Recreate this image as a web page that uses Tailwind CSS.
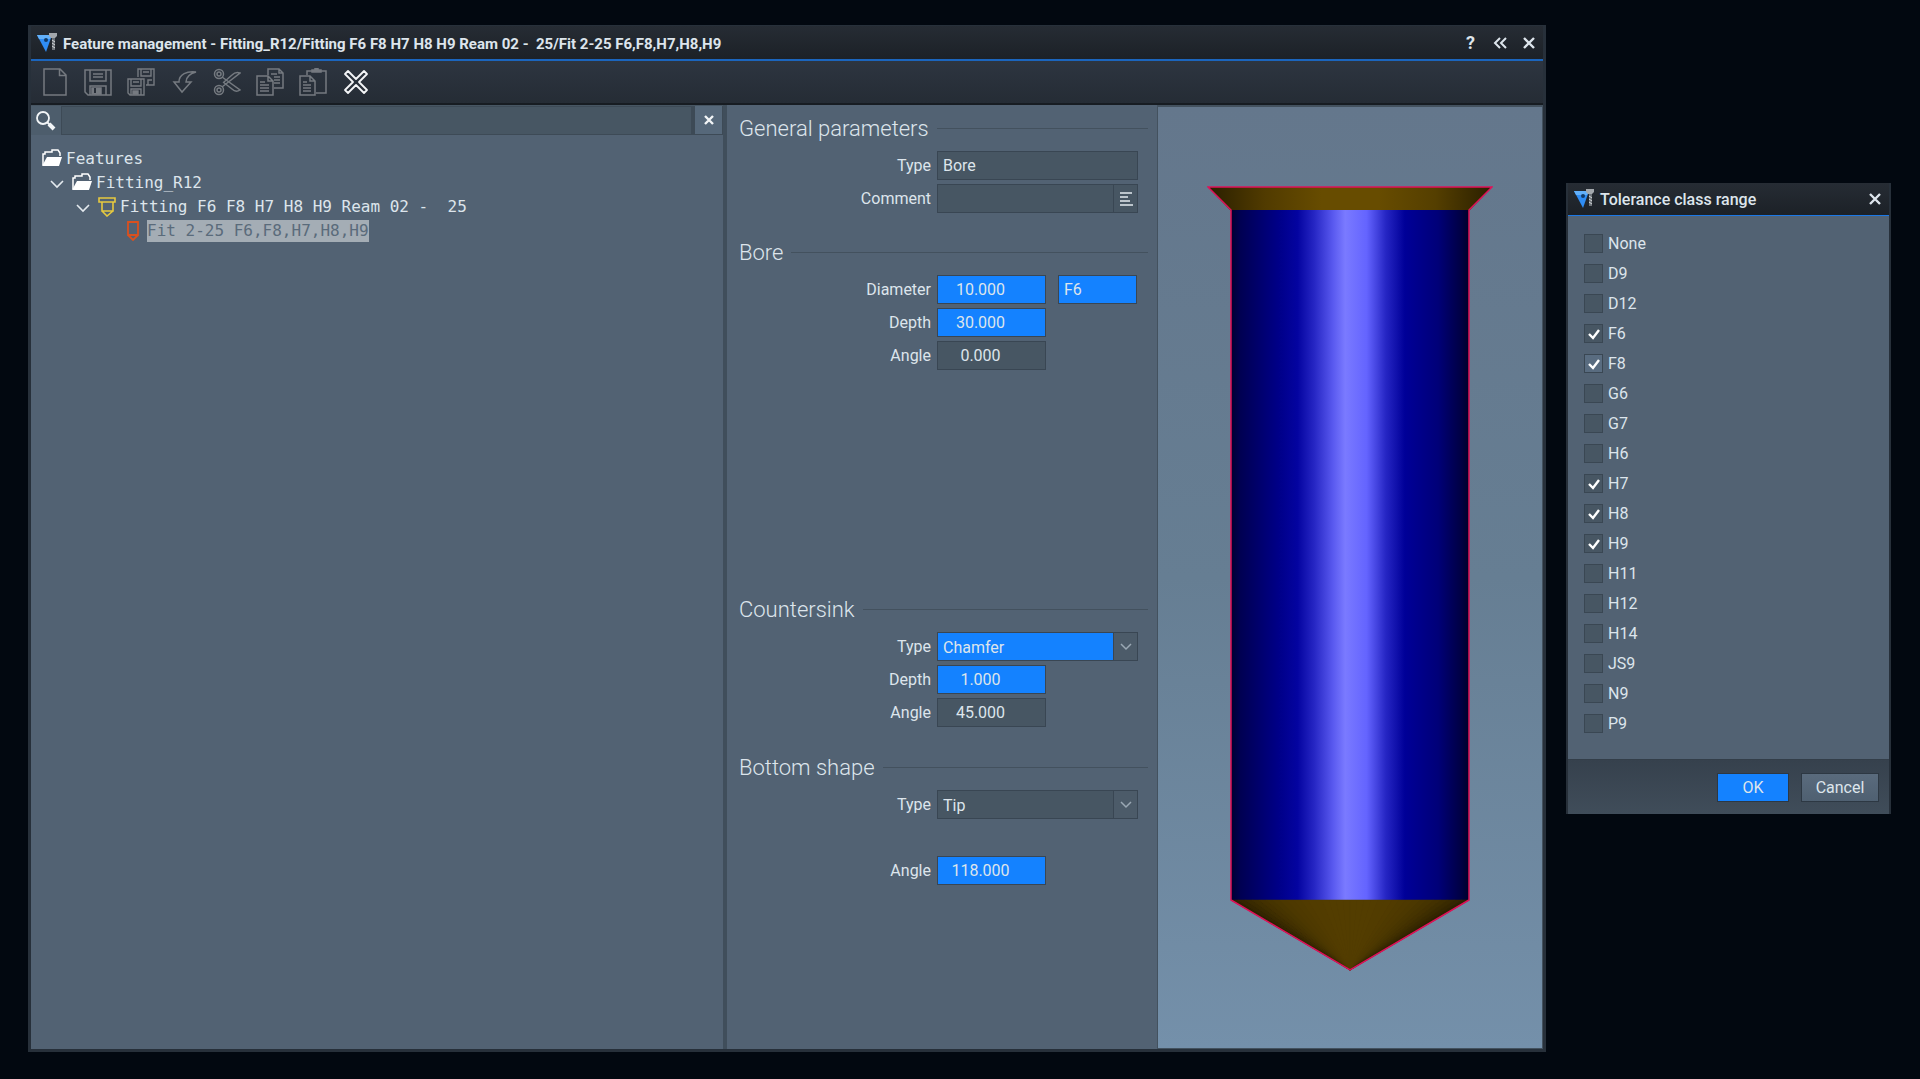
<!DOCTYPE html>
<html lang="en">

<head>
    <meta charset="UTF-8">
    <meta name="viewport" content="width=device-width, initial-scale=1.0">
    <title>Feature management</title>
    <script src="https://cdn.jsdelivr.net/npm/@tailwindcss/browser@4"></script>
</head>

<body class="bg-[#020810] min-h-screen flex items-stretch gap-5 pl-7 pr-[29px] pt-[25px] pb-[27px] font-['Roboto',sans-serif] text-base text-[#dde5ec]">

    <!-- Main window -->
    <main class="flex-1 min-w-0 flex flex-col bg-[#232b35] border-x-3 border-b-3 border-t border-[#27303a]">

        <!-- Title bar -->
        <header class="h-[33px] flex items-center bg-linear-to-b from-[#262c34] to-[#1c2127] pl-[6px]">
            <svg class="w-5 h-5 shrink-0" viewBox="0 0 20 20">
                <path d="M0 2h15L9 19z" fill="#2f8df5" />
                <path d="M0 2h15l-2 4H2z" fill="#62b0fa" />
                <circle cx="9" cy="7" r="2" fill="#123a66" />
                <path d="M12 0h8v3l-2 2h-4l-2-2z" fill="#a3a8ad" />
                <path d="M15 5h3v12h-3z" fill="#6c7278" />
                <path d="M15 7l3 2M15 10l3 2M15 13l3 2" stroke="#d5d9dc" />
            </svg>
            <h1 class="flex-1 min-w-0 truncate whitespace-pre text-[15px] leading-6 font-bold pl-[6px] pt-[3px]">Feature management - Fitting_R12/Fitting F6 F8 H7 H8 H9 Ream 02 -  25/Fit 2-25 F6,F8,H7,H8,H9</h1>
            <button class="w-[29px] h-7 font-bold text-lg leading-7" aria-label="Help">?</button>
            <button class="w-[29px] h-7 grid place-items-center" aria-label="Collapse">
                <svg class="w-4 h-4" viewBox="0 0 16 16" fill="none" stroke="currentColor" stroke-width="2"><path d="M8 3L3 8l5 5M14 3L9 8l5 5" /></svg>
            </button>
            <button class="w-[29px] h-7 grid place-items-center" aria-label="Close">
                <svg class="w-4 h-4" viewBox="0 0 16 16" fill="none" stroke="currentColor" stroke-width="2.4"><path d="M3 3l10 10M13 3L3 13" /></svg>
            </button>
        </header>

        <!-- Toolbar -->
        <div class="h-[46px] flex items-center bg-linear-to-b from-[#2d3540] to-[#252c35] border-t-2 border-t-[#1b65bd] border-b-2 border-b-[#171c22] pl-[2px] text-[#757a80]">
            <button class="w-[43px] h-10 grid place-items-center" aria-label="New">
                <svg class="w-7 h-7" viewBox="0 0 28 28" fill="none" stroke="currentColor" stroke-width="1.5"><path d="M3 1h16l6 6v20H3zM18.500 1v6.500H25" /></svg>
            </button>
            <button class="w-[43px] h-10 grid place-items-center" aria-label="Save">
                <svg class="w-7 h-7" viewBox="0 0 28 28" fill="none" stroke="currentColor" stroke-width="1.5">
                    <path d="M1 2h26v25H4l-3-3zM6 2v11h16V2M9 6h10M9 9h10M6 27v-9h16v9" />
                    <path d="M8 20h9v6H8z" fill="currentColor" /><path d="M11 20v5" stroke="#292f39" stroke-width="2" />
                </svg>
            </button>
            <button class="w-[43px] h-10 grid place-items-center" aria-label="Save all">
                <svg class="w-7 h-7" viewBox="0 0 28 28" fill="none" stroke="currentColor" stroke-width="1.4">
                    <path d="M11 9V1h16v16h-8M14 1v7h10V1M16 4h6M21 17v-5h4" />
                    <path d="M1 11h16v16H3l-2-2zM4 11v7h10v-7M6 14h6M4 27v-6h10v6" />
                    <path d="M6 23h5v3H6z" fill="currentColor" />
                </svg>
            </button>
            <button class="w-[43px] h-10 grid place-items-center" aria-label="Undo">
                <svg class="w-7 h-7" viewBox="0 0 28 28" fill="none" stroke="currentColor" stroke-width="1.5"><path d="M26 4C17 3 9 6 9 14H4l8 10 9-10h-5c0-5 3-8 10-10z" /></svg>
            </button>
            <button class="w-[43px] h-10 grid place-items-center" aria-label="Cut">
                <svg class="w-7 h-7" viewBox="0 0 28 28" fill="none" stroke="currentColor" stroke-width="1.5">
                    <circle cx="6" cy="6" r="4.500" /><circle cx="6" cy="6" r="2" /><circle cx="6" cy="22" r="4.500" /><circle cx="6" cy="22" r="2" />
                    <path d="M9 9l18 13c-3 2-6 1-8-1l-9-7M9 19L27 5c-3-1-6 0-8 2l-8 7" />
                </svg>
            </button>
            <button class="w-[43px] h-10 grid place-items-center" aria-label="Copy">
                <svg class="w-7 h-7" viewBox="0 0 28 28" fill="none" stroke="currentColor" stroke-width="1.5">
                    <path d="M12 7V1h11l4 4v15h-9M23 1v4h4M15 6h6M18 9h6M18 12h6M18 15h6" />
                    <path d="M1 8h11l5 5v14H1zM12 8v5h5M4 14h5M4 17h9M4 20h9M4 23h9" />
                </svg>
            </button>
            <button class="w-[43px] h-10 grid place-items-center" aria-label="Paste">
                <svg class="w-7 h-7" viewBox="0 0 28 28" fill="none" stroke="currentColor" stroke-width="1.5">
                    <path d="M8 7V3h19v22H17" /><path d="M13 4V2h3V0h3v2h3v2z" fill="currentColor" />
                    <path d="M1 8h10l5 5v14H1zM11 8v5h5M4 14h4M4 17h8M4 20h8M4 23h8" />
                </svg>
            </button>
            <button class="w-[43px] h-10 grid place-items-center text-[#f4f6f8]" aria-label="Delete">
                <svg class="w-7 h-7" viewBox="0 0 28 28" fill="none" stroke="currentColor" stroke-width="1.8" stroke-linejoin="round"><path d="M6 3l8 8 8-8 3 3-8 8 8 8-3 3-8-8-8 8-3-3 8-8-8-8z" /></svg>
            </button>
        </div>

        <div class="flex-1 flex bg-[#526273]">

            <!-- Feature tree -->
            <section class="flex-1 min-w-0 flex flex-col border-r-4 border-[#404e5b]">
                <div class="h-[30px] flex bg-[#475663] pt-px">
                    <label for="search" class="w-[30px] grid place-items-center bg-[#4d5d6c]">
                        <svg class="w-5 h-5" viewBox="0 0 20 20" fill="none" stroke="#f2f5f7"><title>Search</title><circle cx="7" cy="7" r="6" stroke-width="1.800" /><path d="M11.500 11.500l2 2" stroke-width="2" /><path d="M13 13l5 5" stroke-width="4" /></svg>
                    </label>
                    <input id="search" type="text" class="flex-1 min-w-0 bg-[#475663] border border-[#3d4a56] px-2 outline-none">
                    <button class="w-[31px] grid place-items-center bg-[#56687a] border-l-3 border-r border-b border-[#3d4a56]" aria-label="Clear search">
                        <svg class="w-[10px] h-[10px]" viewBox="0 0 10 10" stroke="#f2f5f7" stroke-width="2.400"><path d="M1 1l8 8M9 1L1 9" /></svg>
                    </button>
                </div>
                <ul class="pt-3 pl-[11px] font-['DejaVu_Sans_Mono',monospace] leading-6">
                    <li class="flex items-center gap-1 h-6">
                        <svg class="w-5 h-5" viewBox="0 0 20 20"><path d="M1 16V5h2V3h7V1h6l2 3v3" fill="none" stroke="#fff" stroke-width="1.500" /><path d="M5 8h15l-3 9H0z" fill="#fff" /></svg>
                        <span>Features</span>
                    </li>
                    <li class="flex items-center gap-1 h-6 pl-2">
                        <svg class="w-[18px] h-4" viewBox="0 0 18 16" fill="none" stroke="#e4eaef" stroke-width="1.600"><path d="M1 6l6 6 6-6" /></svg>
                        <svg class="w-5 h-5" viewBox="0 0 20 20"><path d="M1 16V5h2V3h7V1h6l2 3v3" fill="none" stroke="#fff" stroke-width="1.500" /><path d="M5 8h15l-3 9H0z" fill="#fff" /></svg>
                        <span>Fitting_R12</span>
                    </li>
                    <li class="flex items-center gap-1 h-6 pl-[34px]">
                        <svg class="w-[18px] h-4" viewBox="0 0 18 16" fill="none" stroke="#e4eaef" stroke-width="1.600"><path d="M1 6l6 6 6-6" /></svg>
                        <svg class="w-[18px] h-5" viewBox="0 0 18 20" fill="none" stroke="#e6c93f" stroke-width="1.600"><path d="M1 1h16v4H1zM4 5v9h11V5M4 14l5 5 6-5" /></svg>
                        <span class="whitespace-pre">Fitting F6 F8 H7 H8 H9 Ream 02 -  25</span>
                    </li>
                    <li class="flex items-center gap-2 h-6 pl-[85px]">
                        <svg class="w-3 h-5" viewBox="0 0 12 20" fill="none" stroke="#d9501e" stroke-width="1.800"><path d="M1 1h10v13H1zM1 14l5 5 5-5" /></svg>
                        <span class="bg-[#a4adb5] text-[#5a6b7b] leading-[22px]">Fit 2-25 F6,F8,H7,H8,H9</span>
                    </li>
                </ul>
            </section>

            <!-- Parameters -->
            <form class="w-[430px] shrink-0 pt-[9px] pl-3 pr-[9px]">
                <fieldset>
                    <legend class="w-full h-7 flex items-center gap-2 text-[22px] font-light">General parameters<span class="flex-1 border-t border-[#43515e]"></span></legend>
                    <div class="grid grid-cols-[192px_201px] gap-x-[6px] gap-y-1 pt-[9px] leading-[29px]">
                        <label for="type" class="text-right">Type</label>
                        <input id="type" value="Bore" class="h-[29px] bg-[#475663] border border-[#394653] px-[5px] outline-none">
                        <label for="comment" class="text-right">Comment</label>
                        <div class="flex h-[29px] bg-[#475663] border border-[#394653]">
                            <input id="comment" class="flex-1 min-w-0 px-[5px] outline-none">
                            <button type="button" class="w-6 grid place-items-center border-l border-[#394653]" aria-label="Edit comment">
                                <svg class="w-[14px] h-[14px]" viewBox="0 0 14 14" stroke="#e4eaef" stroke-width="1.500"><path d="M1 1h12M1 5h8M1 9h10M1 13h13" /></svg>
                            </button>
                        </div>
                    </div>
                </fieldset>

                <fieldset class="mt-[25px]">
                    <legend class="w-full h-7 flex items-center gap-2 text-[22px] font-light">Bore<span class="flex-1 border-t border-[#43515e]"></span></legend>
                    <div class="grid grid-cols-[192px_201px] gap-x-[6px] gap-y-1 pt-[9px] leading-[29px]">
                        <label for="bore-diameter" class="text-right">Diameter</label>
                        <div class="flex gap-3">
                            <input id="bore-diameter" value="10.000" class="w-[109px] h-[29px] bg-[#1482ff] border border-[#394653] text-center pr-[22px] outline-none">
                            <input aria-label="Tolerance class" value="F6" class="w-[79px] h-[29px] bg-[#1482ff] border border-[#394653] px-[5px] outline-none">
                        </div>
                        <label for="bore-depth" class="text-right">Depth</label>
                        <input id="bore-depth" value="30.000" class="w-[109px] h-[29px] bg-[#1482ff] border border-[#394653] text-center pr-[22px] outline-none">
                        <label for="bore-angle" class="text-right">Angle</label>
                        <input id="bore-angle" value="0.000" class="w-[109px] h-[29px] bg-[#475663] border border-[#394653] text-center pr-[22px] outline-none">
                    </div>
                </fieldset>

                <fieldset class="mt-[225px]">
                    <legend class="w-full h-7 flex items-center gap-2 text-[22px] font-light">Countersink<span class="flex-1 border-t border-[#43515e]"></span></legend>
                    <div class="grid grid-cols-[192px_201px] gap-x-[6px] gap-y-1 pt-[9px] leading-[29px]">
                        <label for="sink-type" class="text-right">Type</label>
                        <div class="relative h-[29px]">
                            <select id="sink-type" class="block appearance-none w-full h-[29px] bg-[#1482ff] border border-[#394653] px-[5px] pb-[2px] outline-none">
                                <option>Chamfer</option>
                            </select>
                            <span class="absolute right-px top-px w-6 h-[27px] grid place-items-center bg-[#4c5b69] border-l border-[#394653] pointer-events-none">
                                <svg class="w-3 h-2" viewBox="0 0 12 8" fill="none" stroke="#9aa8b4" stroke-width="1.500"><path d="M1 1l5 5 5-5" /></svg>
                            </span>
                        </div>
                        <label for="sink-depth" class="text-right">Depth</label>
                        <input id="sink-depth" value="1.000" class="w-[109px] h-[29px] bg-[#1482ff] border border-[#394653] text-center pr-[22px] outline-none">
                        <label for="sink-angle" class="text-right">Angle</label>
                        <input id="sink-angle" value="45.000" class="w-[109px] h-[29px] bg-[#475663] border border-[#394653] text-center pr-[22px] outline-none">
                    </div>
                </fieldset>

                <fieldset class="mt-[26px]">
                    <legend class="w-full h-7 flex items-center gap-2 text-[22px] font-light">Bottom shape<span class="flex-1 border-t border-[#43515e]"></span></legend>
                    <div class="grid grid-cols-[192px_201px] gap-x-[6px] gap-y-[37px] pt-[9px] leading-[29px]">
                        <label for="bottom-type" class="text-right">Type</label>
                        <div class="relative h-[29px]">
                            <select id="bottom-type" class="block appearance-none w-full h-[29px] bg-[#475663] border border-[#394653] px-[5px] pb-[2px] outline-none">
                                <option>Tip</option>
                            </select>
                            <span class="absolute right-px top-px w-6 h-[27px] grid place-items-center bg-[#4c5b69] border-l border-[#394653] pointer-events-none">
                                <svg class="w-3 h-2" viewBox="0 0 12 8" fill="none" stroke="#9aa8b4" stroke-width="1.500"><path d="M1 1l5 5 5-5" /></svg>
                            </span>
                        </div>
                        <label for="bottom-angle" class="text-right">Angle</label>
                        <input id="bottom-angle" value="118.000" class="w-[109px] h-[29px] bg-[#1482ff] border border-[#394653] text-center pr-[22px] outline-none">
                    </div>
                </fieldset>
            </form>

            <!-- Preview of the bore -->
            <section class="w-[386px] shrink-0 flex justify-center items-start pt-[79px] bg-linear-to-b from-[#64778c] via-[#667e93] to-[#7490aa] border-x border-t-2 border-b border-[#43515e]">
                <svg class="w-[286px]" viewBox="0 0 286 786">
                    <defs>
                        <linearGradient id="shaft">
                            <stop offset="0" stop-color="#000030" />
                            <stop offset=".04" stop-color="#000052" />
                            <stop offset=".2" stop-color="#000088" />
                            <stop offset=".28" stop-color="#0404a0" />
                            <stop offset=".35" stop-color="#2626c4" />
                            <stop offset=".43" stop-color="#5a5af0" />
                            <stop offset=".48" stop-color="#7a7aff" />
                            <stop offset=".57" stop-color="#6464ff" />
                            <stop offset=".65" stop-color="#2626c4" />
                            <stop offset=".73" stop-color="#000098" />
                            <stop offset=".87" stop-color="#000078" />
                            <stop offset=".97" stop-color="#000042" />
                            <stop offset="1" stop-color="#000028" />
                        </linearGradient>
                        <linearGradient id="chamfer">
                            <stop offset="0" stop-color="#2a1f00" />
                            <stop offset=".2" stop-color="#513b00" />
                            <stop offset=".4" stop-color="#674c00" />
                            <stop offset=".6" stop-color="#674c00" />
                            <stop offset=".8" stop-color="#553f00" />
                            <stop offset="1" stop-color="#2a1f00" />
                        </linearGradient>
                    </defs>
                    <path d="M1 1h284l-23 24H24z" fill="url(#chamfer)" />
                    <path d="M24 24h238v690H24z" fill="url(#shaft)" />
                    <path d="M24 714h238l-119 70z" fill="#533d00" />
                    <g id="tip"></g>
                    <path d="M1 1h284l-23 23v690l-119 70-119-70V24z" fill="none" stroke="#e01058" stroke-width="1.500" />
                </svg>
            </section>
        </div>
    </main>

    <!-- Tolerance dialog -->
    <aside class="w-[325px] shrink-0 self-start mt-[158px] bg-[#526273] border-x-2 border-[#27303a]">
        <header class="h-[33px] flex items-center bg-linear-to-b from-[#262c34] to-[#1c2127] border-b border-[#1b78e6] pl-[6px]">
            <svg class="w-5 h-5 shrink-0" viewBox="0 0 20 20">
                <path d="M0 2h15L9 19z" fill="#2f8df5" />
                <path d="M0 2h15l-2 4H2z" fill="#62b0fa" />
                <circle cx="9" cy="7" r="2" fill="#123a66" />
                <path d="M12 0h8v3l-2 2h-4l-2-2z" fill="#a3a8ad" />
                <path d="M15 5h3v12h-3z" fill="#6c7278" />
                <path d="M15 7l3 2M15 10l3 2M15 13l3 2" stroke="#d5d9dc" />
            </svg>
            <h2 class="flex-1 font-medium pl-[6px] pt-[2px]">Tolerance class range</h2>
            <button class="w-[29px] h-7 grid place-items-center" aria-label="Close">
                <svg class="w-4 h-4" viewBox="0 0 16 16" fill="none" stroke="currentColor" stroke-width="2.400"><path d="M3 3l10 10M13 3L3 13" /></svg>
            </button>
        </header>
        <div id="classes" class="pt-3 pb-[21px] pl-4"></div>
        <footer class="h-[55px] flex items-center justify-end gap-3 bg-linear-to-b from-[#36414d] to-[#404d5a] border-t border-[#333e49] pr-[10px]">
            <button class="w-[72px] h-[29px] bg-[#1482ff] border border-[#2d3843] pt-px">OK</button>
            <button class="w-[78px] h-[29px] bg-linear-to-b from-[#5a6b7d] to-[#4f6071] border border-[#2d3843] pt-px">Cancel</button>
        </footer>
    </aside>

    <script>
        const classes = ['None', 'D9', 'D12', 'F6', 'F8', 'G6', 'G7', 'H6', 'H7', 'H8', 'H9', 'H11', 'H12', 'H14', 'JS9', 'N9', 'P9'];
        const selected = ['F6', 'F8', 'H7', 'H8', 'H9'];
        const focused = 'F8';

        document.getElementById('classes').innerHTML = classes.map(name => `
            <label class="flex items-center h-[30px]">
                <span class="relative w-[19px] h-[19px] mr-[5px]">
                    <input type="checkbox" ${selected.includes(name) ? 'checked' : ''}
                        class="peer block appearance-none w-[19px] h-[19px] border border-[#3a4753] ${name === focused ? 'bg-[#596c80]' : 'bg-[#475663]'}">
                    <svg class="hidden peer-checked:block absolute inset-0 w-[19px] h-[19px] pointer-events-none" viewBox="0 0 19 19" fill="none" stroke="#fff" stroke-width="2.400"><path d="M5 10l4 4 6-8" /></svg>
                </span>
                <span class="pt-[2px]">${name}</span>
            </label>`).join('');

        // Cone shading: a fan of facets from the apex, darker towards both sides
        const facets = 34;
        let fan = '';
        for (let i = 0; i < facets; i++) {
            const x = 24 + i * 238 / facets;
            const side = Math.abs((i + 0.5) / facets * 2 - 1);
            const light = 1 - 0.5 * Math.pow(side, 3);
            const fill = `rgb(${Math.round(83 * light)},${Math.round(61 * light)},0)`;
            fan += `<path d="M${x} 714H${x + 238 / facets}L143 784z" fill="${fill}" stroke="${fill}" stroke-width=".5"/>`;
        }
        document.getElementById('tip').innerHTML = fan;
    </script>
</body>

</html>
